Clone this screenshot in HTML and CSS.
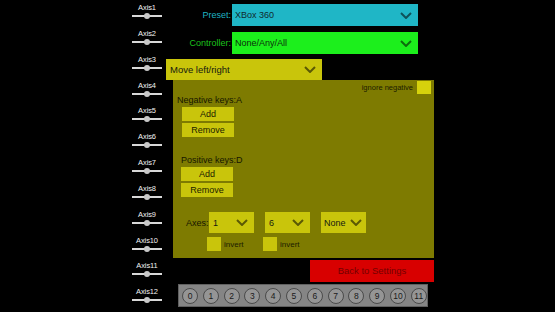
FILE: index.html
```html
<!DOCTYPE html>
<html>
<head>
<meta charset="utf-8">
<link rel="stylesheet" href="styles.css">
</head>
<body>
<div class="app">
  <div class="axes">
    <div class="axis"><span class="axis-label">Axis1</span><span class="slider"><span class="knob"></span></span></div>
    <div class="axis"><span class="axis-label">Axis2</span><span class="slider"><span class="knob"></span></span></div>
    <div class="axis"><span class="axis-label">Axis3</span><span class="slider"><span class="knob"></span></span></div>
    <div class="axis"><span class="axis-label">Axis4</span><span class="slider"><span class="knob"></span></span></div>
    <div class="axis"><span class="axis-label">Axis5</span><span class="slider"><span class="knob"></span></span></div>
    <div class="axis"><span class="axis-label">Axis6</span><span class="slider"><span class="knob"></span></span></div>
    <div class="axis"><span class="axis-label">Axis7</span><span class="slider"><span class="knob"></span></span></div>
    <div class="axis"><span class="axis-label">Axis8</span><span class="slider"><span class="knob"></span></span></div>
    <div class="axis"><span class="axis-label">Axis9</span><span class="slider"><span class="knob"></span></span></div>
    <div class="axis"><span class="axis-label">Axis10</span><span class="slider"><span class="knob"></span></span></div>
    <div class="axis"><span class="axis-label">Axis11</span><span class="slider"><span class="knob"></span></span></div>
    <div class="axis"><span class="axis-label">Axis12</span><span class="slider"><span class="knob"></span></span></div>
  </div>

  <div class="main">
    <div class="top-row">
      <span class="top-label preset-label">Preset:</span>
      <div class="dropdown dd-preset"><span>XBox 360</span><svg class="chev" viewBox="0 0 12 7"><polyline points="1,1 6,6 11,1"/></svg></div>
    </div>
    <div class="top-row controller-row">
      <span class="top-label controller-label">Controller:</span>
      <div class="dropdown dd-controller"><span>None/Any/All</span><svg class="chev" viewBox="0 0 12 7"><polyline points="1,1 6,6 11,1"/></svg></div>
    </div>
    <div class="dropdown dd-action"><span>Move left/right</span><svg class="chev" viewBox="0 0 12 7"><polyline points="1,1 6,6 11,1"/></svg></div>

    <div class="panel">
      <div class="ignore-row"><span class="small-text">ignore negative</span><span class="check check-bright"></span></div>

      <div class="keys-group neg">
        <div class="keys-label">Negative keys:A</div>
        <div class="btn">Add</div>
        <div class="btn btn-2">Remove</div>
      </div>

      <div class="keys-group pos">
        <div class="keys-label">Positive keys:D</div>
        <div class="btn">Add</div>
        <div class="btn btn-2">Remove</div>
      </div>

      <div class="axes-row">
        <span class="axes-label">Axes:</span>
        <div class="dropdown dd-small"><span>1</span><svg class="chev" viewBox="0 0 12 7"><polyline points="1,1 6,6 11,1"/></svg></div>
        <div class="dropdown dd-small"><span>6</span><svg class="chev" viewBox="0 0 12 7"><polyline points="1,1 6,6 11,1"/></svg></div>
        <div class="dropdown dd-small dd-none"><span>None</span><svg class="chev" viewBox="0 0 12 7"><polyline points="1,1 6,6 11,1"/></svg></div>
      </div>
      <div class="invert-row">
        <div class="invert"><span class="check"></span><span class="small-text">invert</span></div>
        <div class="invert"><span class="check"></span><span class="small-text">invert</span></div>
      </div>
    </div>

    <div class="back-row"><div class="back-btn">Back to Settings</div></div>

    <div class="buttons-bar">
      <span class="circ">0</span><span class="circ">1</span><span class="circ">2</span><span class="circ">3</span>
      <span class="circ">4</span><span class="circ">5</span><span class="circ">6</span><span class="circ">7</span>
      <span class="circ">8</span><span class="circ">9</span><span class="circ">10</span><span class="circ">11</span>
    </div>
  </div>
</div>
</body>
</html>
```

FILE: styles.css
```css
html, body {
  margin: 0;
  padding: 0;
  background: #000;
}
body {
  width: 555px;
  height: 312px;
  overflow: hidden;
  font-family: "Liberation Sans", Arial, sans-serif;
}
.app {
  display: flex;
  height: 312px;
}

/* axis sliders */
.axes {
  margin-left: 130px;
  width: 34px;
  display: flex;
  flex-direction: column;
}
.axis {
  height: 25.85px;
  display: flex;
  flex-direction: column;
  align-items: center;
}
.axis-label {
  color: #f2f2f2;
  font-size: 7.5px;
  line-height: 8px;
  margin-top: 4px;
  letter-spacing: -0.1px;
}
.slider {
  position: relative;
  display: block;
  width: 30px;
  height: 2px;
  margin-top: 3px;
  background: #d8d8d8;
}
.knob {
  position: absolute;
  left: 12px;
  top: -2px;
  width: 6px;
  height: 6px;
  border-radius: 50%;
  background: #c8c8c8;
}

/* main column */
.main {
  margin-left: 2px;
  width: 268px;
  display: flex;
  flex-direction: column;
}
.top-row {
  display: flex;
  align-items: center;
  height: 22px;
  margin-top: 4px;
}
.controller-row {
  margin-top: 6px;
}
.top-label {
  width: 65px;
  padding-right: 1px;
  text-align: right;
  font-size: 9px;
}
.preset-label { color: #1fb3c3; }
.controller-label { color: #1cc21c; }

.dropdown {
  display: flex;
  align-items: center;
  justify-content: space-between;
  box-sizing: border-box;
  padding: 0 6px 0 3px;
  font-size: 9px;
  color: #151a10;
}
.chev {
  width: 12px;
  height: 7px;
  fill: none;
  stroke: rgba(0, 0, 0, 0.55);
  stroke-width: 2;
}
.dd-preset {
  width: 186px;
  height: 22px;
  background: #1fb6c6;
  color: #102a2e;
}
.dd-controller {
  width: 186px;
  height: 22px;
  background: #1cef1c;
  color: #0b2e0b;
}
.dd-action {
  margin-top: 5px;
  width: 156px;
  height: 21px;
  background: #c9c50b;
  font-size: 9.5px;
  padding-left: 4px;
}

/* panel */
.panel {
  margin-left: 7px;
  width: 261px;
  height: 178px;
  box-sizing: border-box;
  background: #7e7b01;
  display: flex;
  flex-direction: column;
}
.ignore-row {
  display: flex;
  justify-content: flex-end;
  align-items: center;
  height: 14px;
  padding-right: 3px;
  gap: 4px;
}
.small-text {
  font-size: 7.5px;
  color: #1c1c00;
}
.check {
  display: block;
  width: 14px;
  height: 14px;
  background: #c9c50b;
}
.check-bright {
  height: 13px;
  background: #d6d20c;
}
.keys-group {
  display: flex;
  flex-direction: column;
}
.keys-label {
  font-size: 9px;
  line-height: 11px;
  height: 11px;
  color: #161600;
}
.neg {
  margin-top: 1px;
  padding-left: 4px;
}
.neg .btn {
  margin-left: 5px;
}
.pos {
  margin-top: 18px;
  padding-left: 8px;
}
.btn {
  margin-top: 1px;
  width: 52px;
  height: 14px;
  line-height: 14px;
  text-align: center;
  font-size: 9px;
  color: #1c1c00;
  background: #c9c50b;
}
.btn-2 {
  margin-top: 2px;
}
.axes-row {
  display: flex;
  align-items: center;
  margin-top: 15px;
  padding-left: 13px;
  height: 21px;
}
.axes-label {
  width: 23px;
  font-size: 9px;
  color: #161600;
}
.dd-small {
  width: 45px;
  height: 21px;
  background: #c9c50b;
  padding: 0 6px 0 4px;
  margin-right: 11px;
}
.dd-none {
  padding: 0 4px 0 3px;
}
.invert-row {
  display: flex;
  margin-top: 4px;
  padding-left: 34px;
}
.invert {
  width: 56px;
  display: flex;
  align-items: center;
  gap: 3px;
}
.invert .small-text {
  font-size: 8px;
}

/* bottom */
.back-row {
  display: flex;
  justify-content: flex-end;
  margin-top: 2px;
}
.back-btn {
  width: 124px;
  height: 22px;
  line-height: 22px;
  text-align: center;
  background: #d80000;
  color: #740000;
  font-size: 9.5px;
}
.buttons-bar {
  margin-top: 2px;
  margin-left: 12px;
  width: 250px;
  height: 23px;
  box-sizing: border-box;
  background: #858585;
  border: 1px solid #606060;
  display: flex;
  align-items: center;
  padding-left: 3px;
  gap: 4.8px;
}
.circ {
  width: 16px;
  height: 16px;
  box-sizing: border-box;
  border-radius: 50%;
  border: 1px solid #4a4a4a;
  background: #959595;
  display: flex;
  align-items: center;
  justify-content: center;
  font-size: 8.5px;
  color: #1a1a1a;
  flex: none;
}
```
